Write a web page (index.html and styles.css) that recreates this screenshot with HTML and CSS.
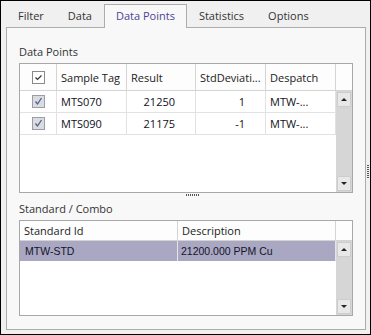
FILE: index.html
```html
<!DOCTYPE html>
<html lang="en">
<head>
    <meta charset="UTF-8">
    <title>Data Points</title>
    <link rel="stylesheet" href="styles.css">
</head>
<body>
    <div class="window">
        <div class="main">
            <div class="tabs">
                <div class="tab">Filter</div>
                <div class="tab">Data</div>
                <div class="tab active">Data Points</div>
                <div class="tab">Statistics</div>
                <div class="tab">Options</div>
            </div>

            <div class="panel">
                <div class="section-label">Data Points</div>
                <div class="grid grid-points">
                    <div class="grid-head">
                        <div class="hcell c-check">
                            <svg class="chk" width="13" height="13" viewBox="0 0 13 13">
                                <rect x="0.5" y="0.5" width="12" height="12" fill="#fff" stroke="#8a8a8a"/>
                                <path d="M3.5 6.5 L5.5 8.5 L9.5 4.5" fill="none" stroke="#333" stroke-width="1.2"/>
                            </svg>
                        </div>
                        <div class="hcell c-tag">Sample Tag</div>
                        <div class="hcell c-result">Result</div>
                        <div class="hcell c-std">StdDeviati...</div>
                        <div class="hcell c-desp">Despatch</div>
                        <div class="hcell c-scroll"></div>
                    </div>
                    <div class="grid-main">
                        <div class="rows">
                            <div class="row">
                                <div class="cell c-check">
                                    <svg class="chk" width="13" height="13" viewBox="0 0 13 13">
                                        <rect x="0.5" y="0.5" width="12" height="12" fill="#dcdcdc" stroke="#9c9cab"/>
                                        <path d="M3.5 6.5 L5.5 9 L9.5 3" fill="none" stroke="#4b5fa8" stroke-width="1.3"/>
                                    </svg>
                                </div>
                                <div class="cell c-tag">MTS070</div>
                                <div class="cell c-result num">21250</div>
                                <div class="cell c-std num">1</div>
                                <div class="cell c-desp">MTW-...</div>
                            </div>
                            <div class="row">
                                <div class="cell c-check">
                                    <svg class="chk" width="13" height="13" viewBox="0 0 13 13">
                                        <rect x="0.5" y="0.5" width="12" height="12" fill="#dcdcdc" stroke="#9c9cab"/>
                                        <path d="M3.5 6.5 L5.5 9 L9.5 3" fill="none" stroke="#4b5fa8" stroke-width="1.3"/>
                                    </svg>
                                </div>
                                <div class="cell c-tag">MTS090</div>
                                <div class="cell c-result num">21175</div>
                                <div class="cell c-std num">-1</div>
                                <div class="cell c-desp">MTW-...</div>
                            </div>
                        </div>
                        <div class="vscroll">
                            <div class="sbtn"><span class="arrow-up"></span></div>
                            <div class="sbtn"><span class="arrow-down"></span></div>
                        </div>
                    </div>
                </div>

                <div class="splitter"><span class="grip-h"></span></div>

                <div class="section-label">Standard / Combo</div>
                <div class="grid grid-std">
                    <div class="grid-head">
                        <div class="hcell c-id">Standard Id</div>
                        <div class="hcell c-descr">Description</div>
                        <div class="hcell c-scroll"></div>
                    </div>
                    <div class="grid-main">
                        <div class="rows">
                            <div class="row selected">
                                <div class="cell c-id">MTW-STD</div>
                                <div class="cell c-descr">21200.000 PPM Cu</div>
                            </div>
                        </div>
                        <div class="vscroll">
                            <div class="sbtn"><span class="arrow-up"></span></div>
                            <div class="sbtn"><span class="arrow-down"></span></div>
                        </div>
                    </div>
                </div>
            </div>
        </div>
        <div class="side-grip"><span class="grip-v"></span></div>
    </div>
</body>
</html>
```

FILE: styles.css
```css
body {
    margin: 0;
    font-family: "Open Sans", "Noto Sans", sans-serif;
    font-size: 11px;
    color: #1e1e1e;
}
.window {
    width: 371px;
    height: 335px;
    box-sizing: border-box;
    border: 1px solid #000;
    background: #f0f0f0;
    display: flex;
    padding: 3px 0 4px 5px;
}
.main {
    width: 360px;
    display: flex;
    flex-direction: column;
}

/* tabs */
.tabs {
    display: flex;
    height: 23px;
}
.tab {
    padding: 0 12px;
    line-height: 23px;
    color: #333;
}
.tab.active {
    position: relative;
    z-index: 1;
    height: 24px;
    margin-bottom: -1px;
    box-sizing: border-box;
    border: 1px solid #acacac;
    border-bottom: none;
    background: #f8f8f8;
    padding: 0 11px;
    line-height: 22px;
    color: #4c4494;
}

/* panel */
.panel {
    flex: 1;
    box-sizing: border-box;
    border: 1px solid #acacac;
    background: #f8f8f8;
    padding: 16px 12px 13px 12px;
    display: flex;
    flex-direction: column;
}
.section-label {
    height: 16px;
    line-height: 16px;
    margin-bottom: 3px;
    color: #333;
}

/* grids */
.grid {
    box-sizing: border-box;
    border: 1px solid #a8a8a8;
    background: #fff;
    display: flex;
    flex-direction: column;
}
.grid-points { height: 130px; }
.grid-std { height: 96px; }
.grid-head {
    display: flex;
    border-bottom: 1px solid #d4d4d4;
    background: #fdfdfd;
}
.grid-points .grid-head { height: 27px; box-sizing: border-box; }
.grid-std .grid-head { height: 20px; box-sizing: border-box; }
.hcell {
    box-sizing: border-box;
    border-right: 1px solid #d4d4d4;
    padding-left: 4px;
    display: flex;
    align-items: center;
    white-space: nowrap;
    overflow: hidden;
    color: #222;
}
.hcell.c-scroll { border-right: none; }
.grid-main {
    flex: 1;
    display: flex;
    min-height: 0;
}
.rows {
    flex: 1;
}
.row {
    display: flex;
    height: 22px;
    box-sizing: border-box;
    border-bottom: 1px solid #e2e2e2;
}
.cell {
    box-sizing: border-box;
    border-right: 1px solid #e2e2e2;
    padding-left: 4px;
    display: flex;
    align-items: center;
    white-space: nowrap;
    overflow: hidden;
    color: #101020;
}
.cell.num {
    justify-content: flex-end;
    padding-right: 20px;
}
.c-check { width: 37px; justify-content: center; padding-left: 0; }
.c-tag { width: 70px; }
.c-result { width: 69px; }
.c-std { width: 70px; }
.c-desp { width: 70px; }
.c-scroll { width: 16px; }
.c-id { width: 158px; }
.c-descr { width: 158px; }

.row.selected {
    height: 20px;
    background: #aaa7c3;
    border-bottom: none;
}
.row.selected .cell {
    border-right-color: #e4e4ec;
    font-family: "Liberation Sans", Arial, sans-serif;
    font-size: 10.5px;
    color: #14142a;
    padding-left: 5px;
}
.row.selected .c-descr { padding-left: 3px; }

/* scrollbar */
.vscroll {
    width: 16px;
    background: #d6d6d6;
    display: flex;
    flex-direction: column;
    justify-content: space-between;
    padding: 1px 1px 1px 1px;
    box-sizing: border-box;
}
.sbtn {
    height: 15px;
    box-sizing: border-box;
    border: 1px solid #cdcdcd;
    background: #e8e8e8;
    display: flex;
    align-items: center;
    justify-content: center;
}
.arrow-up {
    width: 0;
    height: 0;
    border-left: 3px solid transparent;
    border-right: 3px solid transparent;
    border-bottom: 3px solid #222;
}
.arrow-down {
    width: 0;
    height: 0;
    border-left: 3px solid transparent;
    border-right: 3px solid transparent;
    border-top: 3px solid #222;
}

/* splitters */
.splitter {
    height: 8px;
    display: flex;
    justify-content: center;
    padding-top: 1px;
    box-sizing: border-box;
}
.grip-h {
    width: 13px;
    height: 2px;
    margin-left: 13px;
    background: repeating-linear-gradient(90deg, #555 0 1px, transparent 1px 2px);
}
.side-grip {
    flex: 1;
    display: flex;
    justify-content: center;
    padding-top: 161px;
}
.grip-v {
    width: 2px;
    height: 13px;
    background: repeating-linear-gradient(180deg, #555 0 1px, transparent 1px 2px);
}
```
